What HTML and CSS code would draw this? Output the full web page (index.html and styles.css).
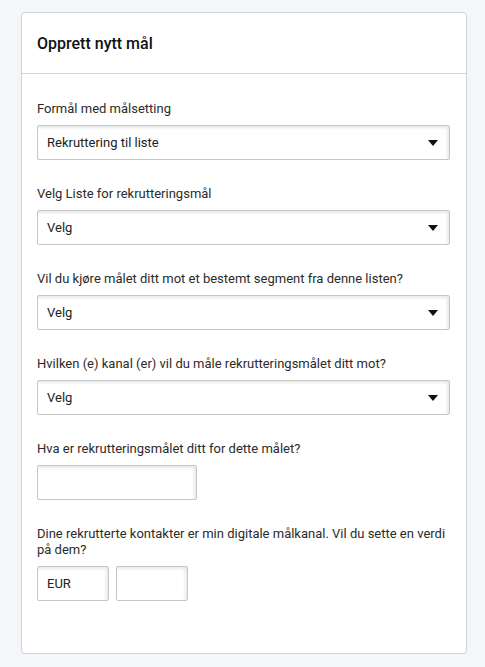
FILE: index.html
```html
<!DOCTYPE html>
<html lang="no">
<head>
<meta charset="utf-8">
<link rel="stylesheet" href="styles.css">
</head>
<body>
<div class="card">
  <div class="card-header">Opprett nytt mål</div>
  <div class="card-body">
    <div class="field">
      <div class="label">Formål med målsetting</div>
      <div class="select"><span>Rekruttering til liste</span><i class="caret"></i></div>
    </div>
    <div class="field">
      <div class="label">Velg Liste for rekrutteringsmål</div>
      <div class="select"><span>Velg</span><i class="caret"></i></div>
    </div>
    <div class="field">
      <div class="label">Vil du kjøre målet ditt mot et bestemt segment fra denne listen?</div>
      <div class="select"><span>Velg</span><i class="caret"></i></div>
    </div>
    <div class="field">
      <div class="label">Hvilken (e) kanal (er) vil du måle rekrutteringsmålet ditt mot?</div>
      <div class="select"><span>Velg</span><i class="caret"></i></div>
    </div>
    <div class="field">
      <div class="label">Hva er rekrutteringsmålet ditt for dette målet?</div>
      <div class="input wide"></div>
    </div>
    <div class="field">
      <div class="label">Dine rekrutterte kontakter er min digitale målkanal. Vil du sette en verdi på dem?</div>
      <div class="row">
        <div class="input small">EUR</div>
        <div class="input small"></div>
      </div>
    </div>
  </div>
</div>
</body>
</html>
```
FILE: styles.css
```css
html, body {
  margin: 0;
  padding: 0;
  background: #f4f6f9;
  font-family: Roboto, "Liberation Sans", Arial, sans-serif;
  color: #222;
}
.card {
  margin: 12px 0 0 21px;
  width: 446px;
  height: 642px;
  background: #fff;
  border: 1px solid #d3d5d8;
  border-radius: 4px;
  box-sizing: border-box;
  box-shadow: 0 1px 2px rgba(0,0,0,0.06);
}
.card-header {
  height: 61px;
  box-sizing: border-box;
  padding: 0 15px;
  display: flex;
  align-items: center;
  font-size: 16px;
  font-weight: 500;
  color: #111;
  border-bottom: 1px solid #d3d5d8;
}
.card-body {
  padding: 27px 16px 0 15px;
  display: flex;
  flex-direction: column;
  gap: 26px;
}
.field {
  display: flex;
  flex-direction: column;
  gap: 8px;
}
.label {
  font-size: 13px;
  line-height: 16px;
  color: #2b2b2b;
}
.select, .input {
  height: 35px;
  box-sizing: border-box;
  border: 1px solid #c6c6c6;
  border-radius: 2px;
  background: #fff;
  box-shadow: inset -2px 2px 3px rgba(0,0,0,0.09);
  font-size: 13px;
  color: #222;
  display: flex;
  align-items: center;
}
.select {
  padding: 0 11px 0 9px;
  justify-content: space-between;
}
.caret {
  width: 0;
  height: 0;
  border-left: 5px solid transparent;
  border-right: 5px solid transparent;
  border-top: 6px solid #111;
}
.input.wide { width: 160px; }
.row { display: flex; gap: 7px; }
.input.small { width: 72px; padding: 0 9px; }
```
